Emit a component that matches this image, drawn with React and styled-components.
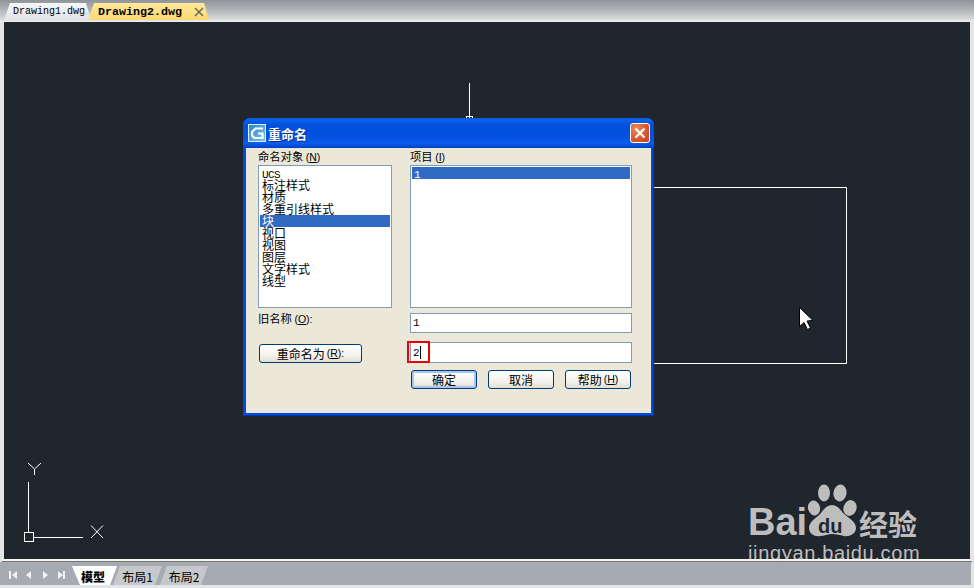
import React from 'react';
import styled, { createGlobalStyle } from 'styled-components';

const Global = createGlobalStyle`
  html, body { margin: 0; padding: 0; background: #e9e9e9; overflow: hidden; }
  * { box-sizing: border-box; }
`;
const cjk = `"Noto Sans CJK SC", "Liberation Sans", sans-serif`;

const Page = styled.div`
  width: 974px; height: 588px; display: flex; flex-direction: column;
  background: #e4e5e6; font-family: ${cjk}; font-size: 12px; color: #000; overflow: hidden;
`;
const TopBar = styled.div`
  height: 22px; display: flex; align-items: flex-end; padding: 0 0 2px 4px;
  background: linear-gradient(#8f9499 0, #aeb2b6 40%, #d4d6d8 85%, #f0f0f0 100%);
`;
const FileTab = styled.div`
  height: 17px; display: flex; align-items: center; font-family: "Liberation Mono", monospace;
  width: ${p => p.$w}px; padding-left: ${p => p.$pad}px;
  font-size: ${p => (p.$active ? '11.67px' : '10px')}; font-weight: ${p => (p.$active ? 700 : 400)};
  background: ${p => (p.$active ? 'linear-gradient(#ffe89a, #fdd873)' : 'linear-gradient(#f6f7f8, #dfe2e6)')};
  clip-path: polygon(0 100%, 6px 0, calc(100% - 5px) 0, 100% 100%);
  margin-right: ${p => (p.$active ? 0 : -3)}px;
`;
const TabClose = styled.svg`margin-left: 12px; flex: none;`;
const Canvas = styled.div`
  flex: 1; margin: 0 4px 2px 4px; position: relative; background: #20262e;
`;
const CanvasEdge = styled.div`
  position: relative; z-index: 1; height: 3px; margin: -2px 2px 0 2px; background: #f5f5ee; border-bottom: 1px solid #777;
`;
const Drawing = styled.svg`position: absolute; left: 0; top: 0;`;
const Dialog = styled.div`
  position: absolute; left: 239px; top: 96px; width: 411px; height: 298px;
  display: flex; flex-direction: column; padding: 0 3px 3px 3px;
  background: #0349dd; border-radius: 7px 7px 0 0; box-shadow: inset 0 -1px 0 #0033b0, inset -1px 0 0 #0033b0;
`;
const TitleBar = styled.div`
  height: 30px; margin: 0 -3px; padding: 0 4px 0 5px; display: flex; align-items: center; border-radius: 7px 7px 0 0;
  background: linear-gradient(#0a5fe0 0, #0a60ea 8%, #034fdc 25%, #0450e0 60%, #0a5cec 85%, #0040c0 100%);
`;
const TitleText = styled.span`
  color: #fff; font-size: 13px; font-weight: 700; margin-left: 2px; flex: 1; text-shadow: 1px 1px 0 #0f2f90;
`;
const CloseBtn = styled.div`
  width: 20px; height: 20px; border: 1px solid #fff; border-radius: 3px; display: flex; align-items: center; justify-content: center;
  background: radial-gradient(circle at 30% 30%, #e98a60, #d9532a 60%, #c84020);
`;
const Body = styled.div`
  flex: 1; background: #ebe8d9; padding: 2px 19px 0 12px; display: grid;
  grid-template-columns: 134px 222px; column-gap: 18px; grid-template-rows: 15px 143px 34px 29px 1fr; align-content: start;
`;
const Label = styled.div`font-size: 11.3px; line-height: 13px; white-space: nowrap;`;
const Latin = styled.span`font-family: "Liberation Sans", sans-serif; font-size: 10.5px;`;
const Mono = styled.span`font-family: "Liberation Mono", monospace; font-size: 11px; letter-spacing: -0.6px;`;
const ListBox = styled.div`
  background: #fff; border: 1px solid #7f9db9; padding: 1px; line-height: 12px; font-size: 12px;
`;
const ListItem = styled.div`
  height: 12px; line-height: 12px; padding-left: 2px; white-space: nowrap;
  ${p => p.$sel && 'background: #316ac5; color: #fff;'}
`;
const OldLabel = styled(Label)`padding-top: 4px;`;
const Input = styled.div`
  position: relative; height: ${p => p.$h}px; margin-top: ${p => p.$mt}px; background: #fff; border: 1px solid #7f9db9;
  padding-left: 2px; display: flex; align-items: center;
`;
const Caret = styled.span`display: inline-block; width: 1px; height: 13px; background: #000; margin-left: 1px;`;
const RedBox = styled.div`
  position: absolute; left: -4px; top: -2px; width: 23px; height: 22px; border: 2px solid #ee0000;
`;
const XpButton = styled.div`
  height: 19px; width: ${p => p.$w}px; border: 1px solid #003c74; border-radius: 3px;
  display: flex; align-items: center; justify-content: center; gap: 2px; font-size: 12px; line-height: 1; white-space: nowrap;
  background: linear-gradient(#fff 0, #f3f2ec 60%, #e2ded2 100%);
  ${p => p.$default && 'box-shadow: inset 0 0 0 2px #a9c4ee;'}
`;
const RenameCell = styled.div`padding: 2px 0 0 1px;`;
const ButtonRow = styled.div`
  grid-column: 2; grid-row: 5; display: flex; justify-content: space-between; padding: 0 1px; margin-top: -1px; height: 19px;
`;
const Watermark = styled.div`
  position: absolute; left: 744px; top: 462px; pointer-events: none; width: 180px; color: #bdbdbd;
`;
const LogoRow = styled.div`display: flex; align-items: flex-end; height: 54px;`;
const Bai = styled.span`
  font-family: "Liberation Sans", sans-serif; font-weight: 700; font-size: 38px; line-height: 38px; width: 59px; margin-bottom: -3px; flex: none;
`;
const Jing = styled.span`
  font-family: ${cjk}; font-weight: 700; font-size: 29px; line-height: 29px; margin-left: 2px; white-space: nowrap;
`;
const Domain = styled.div`
  font-family: "Liberation Sans", sans-serif; font-size: 20px; line-height: 22px; margin-top: 4px; letter-spacing: 0.65px; white-space: nowrap;
`;
const BottomBar = styled.div`
  position: relative; z-index: 1; height: 23px; margin: 0 3px 3px 0; display: flex; align-items: flex-end; padding-left: 4px;
  background: rgba(161, 167, 174, 0.93);
`;
const NavIcons = styled.svg`flex: none; margin-bottom: 2px; margin-right: -6px;`;
const LayoutTab = styled.div`
  height: 19px; margin-right: ${p => p.$mr}px; width: ${p => p.$w}px; display: flex; align-items: center; justify-content: center;
  font-size: 12px; padding-top: 1px; flex: none;
  font-weight: ${p => (p.$active ? 900 : 400)};
  background: ${p => (p.$active ? '#ffffff' : '#c6c8cb')};
  clip-path: ${p => (p.$active
    ? 'polygon(0 0, 100% 0, calc(100% - 7px) 100%, 8px 100%)'
    : 'polygon(7px 0, 100% 0, calc(100% - 7px) 100%, 0 100%)')};
  ${p => p.$active && 'position: relative; z-index: 1; padding-right: 3px;'}
`;

const items = ['标注样式', '材质', '多重引线样式', '块', '视口', '视图', '图层', '文字样式', '线型'];

const AppIcon = () => (
  <svg width="18" height="18" viewBox="0 0 18 18">
    <defs>
      <linearGradient id="ic" x1="0" y1="0" x2="1" y2="1">
        <stop offset="0" stopColor="#2a86cc" />
        <stop offset="1" stopColor="#7cc4ec" />
      </linearGradient>
    </defs>
    <rect x="0.500" y="0.500" width="17" height="17" fill="url(#ic)" stroke="#dff0fa" />
    <path d="M15 4.500H7.500L4 8v3.500L6.500 14H14.500V9.500H10" fill="none" stroke="#fff" strokeWidth="2.200" />
  </svg>
);

const Paw = () => (
  <svg width="50" height="54" viewBox="0 0 50 54" style={{ flex: 'none' }}>
    <ellipse cx="7" cy="24" rx="6" ry="7.500" transform="rotate(-15 7 24)" fill="#bdbdbd" />
    <ellipse cx="17" cy="9" rx="6" ry="8.500" fill="#bdbdbd" />
    <ellipse cx="33" cy="9" rx="6.500" ry="8.500" transform="rotate(8 33 9)" fill="#bdbdbd" />
    <ellipse cx="43" cy="24" rx="6.500" ry="8" transform="rotate(18 43 24)" fill="#bdbdbd" />
    <path d="M25 21c5 0 8 4 11 8 4 4 13 8 13 15 0 6-7 9-12 8-4-1-8-2-12-2s-8 2-12 2c-5 1-11-2-11-8 0-7 8-10 12-15 3-4 6-8 11-8z" fill="#bdbdbd" />
    <text x="11" y="49" fontFamily="Liberation Sans, sans-serif" fontWeight="700" fontSize="20" fill="#20262e">du</text>
  </svg>
);

export default function App() {
  return (
    <Page>
      <Global />
      <TopBar>
        <FileTab $w={87} $pad={9}>Drawing1.dwg</FileTab>
        <FileTab $w={121} $pad={10} $active>
          Drawing2.dwg
          <TabClose width="10" height="10" viewBox="0 0 10 10">
            <path d="M1 1l8 8M9 1l-8 8" stroke="#6a6a58" strokeWidth="1.500" />
          </TabClose>
        </FileTab>
      </TopBar>
      <Canvas>
        <Drawing width="966" height="538" viewBox="0 0 966 538" fill="none" stroke="#fff">
          <path d="M465.500 61V96" />
          <rect x="462.500" y="94.500" width="6" height="6" />
          <path d="M640 165.500H842.500V341.500H640" />
          <path d="M24.500 460V510M29 515.500H79" />
          <rect x="20.500" y="510.500" width="9" height="9" />
          <path d="M87 503.500L99 516M87 516L99 503.500" />
          <path d="M24 441L30.500 447L37 441M30.500 447V453" />
          <path d="M795.500 285.500V304.500L800 300.500L803.500 307.500L806.500 306L803 299L809 298.500Z" fill="#fff" stroke="#000" />
        </Drawing>
        <Dialog>
          <TitleBar>
            <AppIcon />
            <TitleText>重命名</TitleText>
            <CloseBtn>
              <svg width="12" height="12" viewBox="0 0 12 12">
                <path d="M1.500 1.500l9 9M10.500 1.500l-9 9" stroke="#fff" strokeWidth="2.200" />
              </svg>
            </CloseBtn>
          </TitleBar>
          <Body>
            <Label>命名对象 <Latin>(<u>N</u>)</Latin></Label>
            <Label>项目 <Latin>(<u>I</u>)</Latin></Label>
            <ListBox>
              <ListItem><Mono>UCS</Mono></ListItem>
              {items.map(t => <ListItem key={t} $sel={t === '块'}>{t}</ListItem>)}
            </ListBox>
            <ListBox>
              <ListItem $sel><Mono>1</Mono></ListItem>
            </ListBox>
            <OldLabel>旧名称 <Latin>(<u>O</u>):</Latin></OldLabel>
            <Input $h={20} $mt={5}><Mono>1</Mono></Input>
            <RenameCell>
              <XpButton $w={103}>重命名为<Latin>(<u>R</u>):</Latin></XpButton>
            </RenameCell>
            <Input $h={21} $mt={0}><Mono>2</Mono><Caret /><RedBox /></Input>
            <ButtonRow>
              <XpButton $w={66} $default>确定</XpButton>
              <XpButton $w={66}>取消</XpButton>
              <XpButton $w={66}>帮助<Latin>(<u>H</u>)</Latin></XpButton>
            </ButtonRow>
          </Body>
        </Dialog>
        <Watermark>
          <LogoRow>
            <Bai>Bai</Bai>
            <Paw />
            <Jing>经验</Jing>
          </LogoRow>
          <Domain>jingyan.baidu.com</Domain>
        </Watermark>
      </Canvas>
      <CanvasEdge />
      <BottomBar>
        <NavIcons width="74" height="16" viewBox="0 0 74 16">
          <g fill="#f2f2f2">
            <path d="M5 4h2v8H5zM13 4v8L8 8z" />
            <path d="M27 4v8L22 8z" />
            <path d="M39 4v8l5-4z" />
            <path d="M54 4v8l5-4zM59 4h2v8h-2z" />
          </g>
        </NavIcons>
        <LayoutTab $w={45} $mr={-4} $active>模型</LayoutTab>
        <LayoutTab $w={49} $mr={-2}>布局1</LayoutTab>
        <LayoutTab $w={48} $mr={0}>布局2</LayoutTab>
      </BottomBar>
    </Page>
  );
}
